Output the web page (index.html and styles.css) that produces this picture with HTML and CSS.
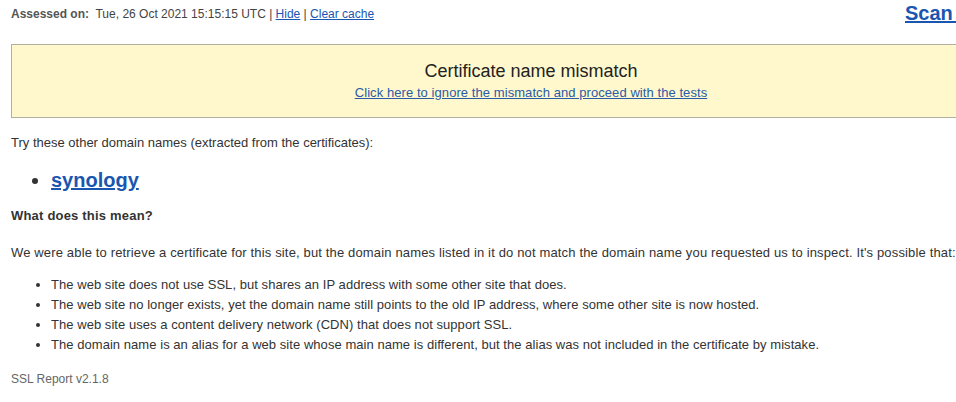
FILE: index.html
```html
<!DOCTYPE html>
<html lang="en">
<head>
    <meta charset="UTF-8">
    <meta name="viewport" content="width=device-width, initial-scale=1.0">
    <title>SSL Report</title>
    <link rel="stylesheet" href="styles.css">
</head>
<body>
    <div id="page">
        <div class="report-header">
            <div class="assessed">
                <b>Assessed on:</b>&nbsp; Tue, 26 Oct 2021 15:15:15 UTC | <a href="#">Hide</a> | <a href="#">Clear cache</a>
            </div>
            <a class="scan-another" href="#">Scan Another &raquo;</a>
        </div>

        <div class="warning-box">
            <div class="warning-title">Certificate name mismatch</div>
            <a class="warning-link" href="#">Click here to ignore the mismatch and proceed with the tests</a>
        </div>

        <p class="try-text">Try these other domain names (extracted from the certificates):</p>
        <ul class="domain-list">
            <li><a href="#">synology</a></li>
        </ul>

        <h3 class="question">What does this mean?</h3>
        <p class="explain">We were able to retrieve a certificate for this site, but the domain names listed in it do not match the domain name you requested us to inspect. It's possible that:</p>
        <ul class="reasons">
            <li>The web site does not use SSL, but shares an IP address with some other site that does.</li>
            <li>The web site no longer exists, yet the domain name still points to the old IP address, where some other site is now hosted.</li>
            <li>The web site uses a content delivery network (CDN) that does not support SSL.</li>
            <li>The domain name is an alias for a web site whose main name is different, but the alias was not included in the certificate by mistake.</li>
        </ul>

        <div class="footer">SSL Report v2.1.8</div>
    </div>
</body>
</html>
```

FILE: styles.css
```css
html, body {
    overflow: hidden;
}
body {
    font-family: "Liberation Sans", Arial, sans-serif;
    font-size: 13px;
    line-height: 15px;
    color: #333;
    margin: 0;
    padding: 0;
    background-color: #fff;
}
a {
    color: #1a56b0;
}
#page {
    width: 1040px;
    margin-left: 11px;
}
.report-header {
    display: flex;
    justify-content: space-between;
    align-items: flex-start;
    height: 44px;
}
.assessed {
    margin-top: 7px;
    font-size: 12px;
    line-height: 14px;
    color: #444;
}
.assessed b {
    color: #555;
}
.scan-another {
    margin-top: 2px;
    font-size: 20px;
    line-height: 23px;
    font-weight: bold;
}
.warning-box {
    background-color: #fff8cc;
    border: 1px solid #b4b0a0;
    padding: 16px 0 17px 0;
    text-align: center;
}
.warning-title {
    font-size: 18px;
    line-height: 21px;
    color: #222;
    margin-bottom: 3px;
}
.warning-link {
    color: #2a5aa8;
    letter-spacing: 0.07px;
}
.try-text {
    margin: 17px 0 0 0;
}
.domain-list {
    margin: 19px 0 0 0;
    padding-left: 40px;
    font-size: 20px;
    line-height: 23px;
    font-weight: bold;
}
.domain-list li {
    list-style: disc;
}
.question {
    font-size: 13px;
    line-height: 15px;
    letter-spacing: 0.2px;
    margin: 16px 0 0 0;
}
.explain {
    margin: 22px 0 0 0;
    letter-spacing: 0.15px;
}
.reasons {
    margin: 17px 0 0 0;
    padding-left: 40px;
    letter-spacing: 0.05px;
}
.reasons li {
    margin-bottom: 5px;
}
.footer {
    margin-top: 20px;
    font-size: 12px;
    line-height: 14px;
    color: #666;
}
```
